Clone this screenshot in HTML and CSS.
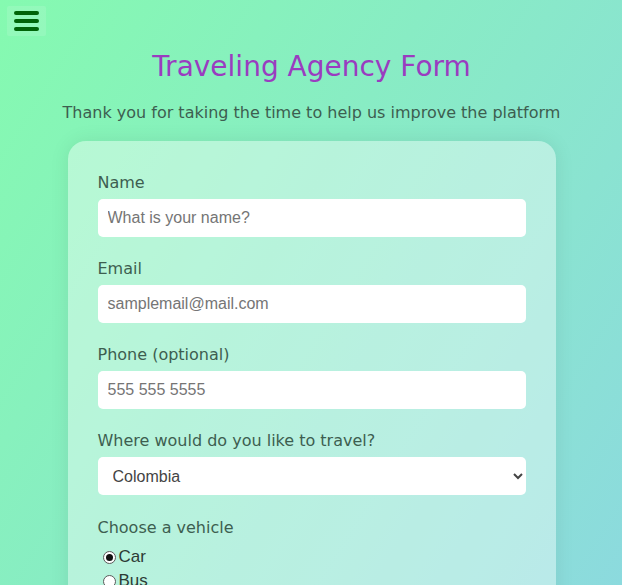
FILE: index.html
```html
<!DOCTYPE html>
<html lang="en">
<head>
<meta charset="utf-8">
<title>Traveling Agency Form</title>
<link rel="stylesheet" href="styles.css">
</head>
<body>
<button class="menu-btn" aria-label="Menu">
  <span class="bar"></span><span class="bar"></span><span class="bar"></span>
</button>
<header class="header">
  <h1 class="title">Traveling Agency Form</h1>
  <p class="subtitle">Thank you for taking the time to help us improve the platform</p>
</header>
<form class="card">
  <div class="group">
    <label class="label" for="name">Name</label>
    <input class="field" id="name" type="text" placeholder="What is your name?">
  </div>
  <div class="group">
    <label class="label" for="email">Email</label>
    <input class="field" id="email" type="email" placeholder="samplemail@mail.com">
  </div>
  <div class="group">
    <label class="label" for="phone">Phone (optional)</label>
    <input class="field" id="phone" type="tel" placeholder="555 555 5555">
  </div>
  <div class="group">
    <label class="label" for="dest">Where would do you like to travel?</label>
    <select class="field select" id="dest">
      <option>Colombia</option>
    </select>
  </div>
  <div class="group radio-group">
    <span class="label">Choose a vehicle</span>
    <label class="radio"><input type="radio" name="v" checked>Car</label>
    <label class="radio"><input type="radio" name="v">Bus</label>
  </div>
</form>
</body>
</html>
```
FILE: styles.css
```css
html, body {
  margin: 0;
  padding: 0;
  height: 100%;
}
body {
  background: linear-gradient(122deg, #85fab0, #8cdade);
  font-family: "DejaVu Sans", Verdana, sans-serif;
  color: #3d5e50;
  overflow: hidden;
  padding-left: 1px;
  box-sizing: border-box;
}
.menu-btn {
  position: absolute;
  top: 6px;
  left: 7px;
  width: 39px;
  height: 30px;
  padding: 0;
  border: none;
  border-radius: 2px;
  background: rgba(255, 255, 255, 0.12);
  display: flex;
  flex-direction: column;
  align-items: center;
  justify-content: center;
  gap: 4px;
}
.bar {
  display: block;
  width: 25px;
  height: 4px;
  border-radius: 2px;
  background: #006409;
}
.header {
  text-align: center;
  padding-top: 49px;
}
.title {
  margin: 0;
  font-size: 28px;
  font-weight: normal;
  color: #9a3cc0;
  line-height: 36px;
}
.subtitle {
  margin: 18px 0 0;
  font-size: 16px;
  line-height: 20px;
  color: #3d5e50;
}
.card {
  width: 428px;
  margin: 18px auto 0;
  padding: 32px 30px 30px;
  border-radius: 18px;
  background: rgba(255, 255, 255, 0.4);
  box-shadow: 0 0 20px rgba(0, 0, 0, 0.08);
  display: flex;
  flex-direction: column;
  gap: 22px;
}
.group {
  display: flex;
  flex-direction: column;
}
.label {
  font-size: 16px;
  line-height: 20px;
  margin-bottom: 6px;
  color: #3d5e50;
}
.radio-group {
  margin-top: 1px;
}
.radio-group .label {
  margin-bottom: 7px;
}
.field {
  box-sizing: border-box;
  width: 100%;
  height: 38px;
  border: none;
  border-radius: 5px;
  background: #fff;
  padding: 0 10px;
  font-family: "Liberation Sans", Arial, sans-serif;
  font-size: 16px;
  color: #555;
  outline: none;
}
.field::placeholder {
  color: #757575;
}
.select {
  padding-left: 11px;
  color: #444;
}
.radio {
  display: flex;
  align-items: center;
  font-family: "Liberation Sans", Arial, sans-serif;
  font-size: 17px;
  line-height: 24px;
  color: #2d3b35;
}
.radio input {
  appearance: none;
  -webkit-appearance: none;
  box-sizing: border-box;
  margin: 0 3px 0 5px;
  width: 13px;
  height: 13px;
  border: 1px solid #5a5a5a;
  border-radius: 50%;
  background: #fff;
  display: inline-grid;
  place-content: center;
}
.radio input:checked::before {
  content: "";
  width: 7px;
  height: 7px;
  border-radius: 50%;
  background: #111;
}
```
